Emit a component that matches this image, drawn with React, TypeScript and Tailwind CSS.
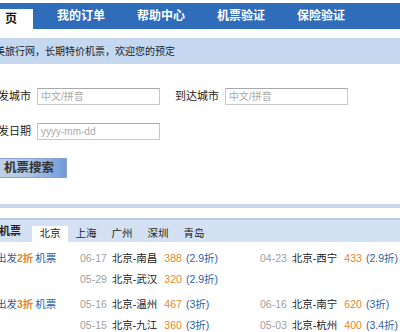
const font = { fontFamily: '"Liberation Sans", "Noto Sans CJK SC", sans-serif' };

const navItems = ["我的订单", "帮助中心", "机票验证", "保险验证"];
const tabs = ["北京", "上海", "广州", "深圳", "青岛"];

type Deal = { date: string; route: string; price: string; off: string };

const groups: { label: string; off: string; rows: [Deal, Deal | null][] }[] = [
  {
    label: "2折",
    off: "2折",
    rows: [
      [
        { date: "06-17", route: "北京-南昌", price: "388", off: "(2.9折)" },
        { date: "04-23", route: "北京-西宁", price: "433", off: "(2.9折)" },
      ],
      [{ date: "05-29", route: "北京-武汉", price: "320", off: "(2.9折)" }, null],
    ],
  },
  {
    label: "3折",
    off: "3折",
    rows: [
      [
        { date: "05-16", route: "北京-温州", price: "467", off: "(3折)" },
        { date: "06-16", route: "北京-南宁", price: "620", off: "(3折)" },
      ],
      [
        { date: "05-15", route: "北京-九江", price: "360", off: "(3折)" },
        { date: "05-03", route: "北京-杭州", price: "400", off: "(3.4折)" },
      ],
    ],
  },
];

function DealCell({ d }: { d: Deal | null }) {
  if (!d) return <div />;
  return (
    <div className="flex items-center whitespace-nowrap">
      <span className="text-[#a0a0a0]">{d.date}</span>
      <span className="ml-[5px] text-[#1a1a1a]">{d.route}</span>
      <span className="ml-[7px] text-[#e0882c]">{d.price}</span>
      <span className="ml-[4px] text-[#2f5f9f]">{d.off}</span>
    </div>
  );
}

function Field({ label, placeholder, className = "" }: { label: string; placeholder: string; className?: string }) {
  return (
    <div className={`flex items-center ${className}`}>
      <span className="w-[44px] text-[11px] text-[#222] whitespace-nowrap">{label}</span>
      <input
        placeholder={placeholder}
        className="ml-[6px] h-[17px] w-[123px] border border-[#c8c8c8] border-t-[#a8a8a8] bg-white px-[3px] text-[10px] text-[#333] placeholder:text-[#a8a8a8] outline-none"
        style={font}
      />
    </div>
  );
}

export default function App() {
  return (
    <div className="h-[332px] w-[400px] overflow-hidden bg-white" style={font}>
      {/* nav */}
      <div className="mt-[3px] flex h-[26px] items-end bg-[#2f6cba]">
        <div className="flex h-[20px] w-[33px] shrink-0 items-center overflow-hidden bg-white text-[12px] font-bold text-[#111] whitespace-nowrap">
          <span className="-ml-[13px] w-[12px] shrink-0">首</span>
          <span className="ml-[6px]">页</span>
        </div>
        <div className="ml-[24px] flex h-full items-center">
          {navItems.map((n) => (
            <div key={n} className="w-[80px] text-[12px] font-bold text-white">
              {n}
            </div>
          ))}
        </div>
      </div>

      {/* banner */}
      <div className="mt-[9px] flex h-[26px] items-center overflow-hidden bg-[#c6d8f0]">
        <span className="-ml-[5px] text-[10px] text-[#222] whitespace-nowrap">美旅行网，长期特价机票，欢迎您的预定</span>
      </div>

      {/* search form */}
      <div className="-ml-[13px]">
        <div className="mt-[24px] flex items-center">
          <Field label="出发城市" placeholder="中文/拼音" />
          <Field label="到达城市" placeholder="中文/拼音" className="ml-[15px]" />
        </div>
        <div className="mt-[18px] flex items-center">
          <Field label="出发日期" placeholder="yyyy-mm-dd" />
        </div>
        <button className="mt-[18px] flex h-[20px] w-[80px] items-center border border-[#8aa6cf] bg-gradient-to-r from-[#c5d4ea] via-[#b0c6e6] to-[#6f9ad8] pl-[16px] text-[12.5px] font-bold text-[#333]">
          机票搜索
        </button>
      </div>

      <div className="mt-[26px] h-[4px] bg-[#cbd8ea]" />

      {/* deals */}
      <div className="mt-[10px] flex h-[24px] items-end overflow-hidden border-t-2 border-[#b9cbe3] bg-[#d3e1f3]">
        <span className="mb-[3px] -ml-[23px] w-[55px] shrink-0 text-[11px] font-bold text-[#222] whitespace-nowrap">特价机票</span>
        <div className="flex items-end">
          {tabs.map((t, i) => (
            <div
              key={t}
              className={`flex h-[16px] w-[36px] items-center justify-center text-[10.5px] text-[#222] ${i === 0 ? "bg-white" : ""}`}
            >
              {t}
            </div>
          ))}
        </div>
      </div>

      <div className="mt-[6px] text-[10.5px]">
        {groups.map((g, gi) => (
          <div key={g.label} className={gi > 0 ? "mt-[4px]" : ""}>
            {g.rows.map((r, ri) => (
              <div key={ri} className="grid h-[21px] grid-cols-[80px_180px_1fr] items-center">
                <div className="-ml-[4px] whitespace-nowrap text-[#2a5caa]">
                  {ri === 0 && (
                    <>
                      出发<span className="font-bold text-[#e0882c]">{g.off}</span>
                      <span className="ml-[2px]">机票</span>
                    </>
                  )}
                </div>
                <DealCell d={r[0]} />
                <DealCell d={r[1]} />
              </div>
            ))}
          </div>
        ))}
      </div>
    </div>
  );
}
